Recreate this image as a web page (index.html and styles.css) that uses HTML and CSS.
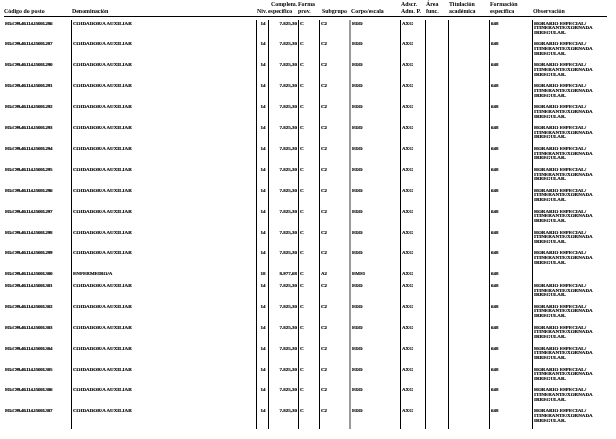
FILE: index.html
```html
<!DOCTYPE html>
<html lang="gl">
<head>
<meta charset="utf-8">
<title>Postos</title>
<link rel="stylesheet" href="styles.css">
</head>
<body>
<div class="sheet">
  <div class="row head">
    <div class="c code">Código do posto</div>
    <div class="c den">Denominación</div>
    <div class="c niv">Niv.</div>
    <div class="c comp"><span class="indent">Complem.</span><br>específico</div>
    <div class="c forma">Forma<br>prov.</div>
    <div class="c sub">Subgrupo</div>
    <div class="c corpo">Corpo/escala</div>
    <div class="c adscr">Adscr.<br>Adm. P.</div>
    <div class="c area">Área<br>func.</div>
    <div class="c tit">Titulación<br>académica</div>
    <div class="c form">Formación<br>específica</div>
    <div class="c obs">Observación</div>
  </div>
  <div class="body">
    <div class="row"><div class="c code">ED.C99.40.114.15001.286</div><div class="c den">COIDADOR/A AUXILIAR</div><div class="c niv">14</div><div class="c comp">7.825,30</div><div class="c forma">C</div><div class="c sub">C2</div><div class="c corpo">EDD</div><div class="c adscr">AXG</div><div class="c area"></div><div class="c tit"></div><div class="c form">648</div><div class="c obs">HORARIO ESPECIAL/<br>ITINERANTE/XORNADA<br>IRREGULAR.</div></div>
    <div class="row"><div class="c code">ED.C99.40.114.15001.287</div><div class="c den">COIDADOR/A AUXILIAR</div><div class="c niv">14</div><div class="c comp">7.825,30</div><div class="c forma">C</div><div class="c sub">C2</div><div class="c corpo">EDD</div><div class="c adscr">AXG</div><div class="c area"></div><div class="c tit"></div><div class="c form">648</div><div class="c obs">HORARIO ESPECIAL/<br>ITINERANTE/XORNADA<br>IRREGULAR.</div></div>
    <div class="row"><div class="c code">ED.C99.40.114.15001.290</div><div class="c den">COIDADOR/A AUXILIAR</div><div class="c niv">14</div><div class="c comp">7.825,30</div><div class="c forma">C</div><div class="c sub">C2</div><div class="c corpo">EDD</div><div class="c adscr">AXG</div><div class="c area"></div><div class="c tit"></div><div class="c form">648</div><div class="c obs">HORARIO ESPECIAL/<br>ITINERANTE/XORNADA<br>IRREGULAR.</div></div>
    <div class="row"><div class="c code">ED.C99.40.114.15001.291</div><div class="c den">COIDADOR/A AUXILIAR</div><div class="c niv">14</div><div class="c comp">7.825,30</div><div class="c forma">C</div><div class="c sub">C2</div><div class="c corpo">EDD</div><div class="c adscr">AXG</div><div class="c area"></div><div class="c tit"></div><div class="c form">648</div><div class="c obs">HORARIO ESPECIAL/<br>ITINERANTE/XORNADA<br>IRREGULAR.</div></div>
    <div class="row"><div class="c code">ED.C99.40.114.15001.292</div><div class="c den">COIDADOR/A AUXILIAR</div><div class="c niv">14</div><div class="c comp">7.825,30</div><div class="c forma">C</div><div class="c sub">C2</div><div class="c corpo">EDD</div><div class="c adscr">AXG</div><div class="c area"></div><div class="c tit"></div><div class="c form">648</div><div class="c obs">HORARIO ESPECIAL/<br>ITINERANTE/XORNADA<br>IRREGULAR.</div></div>
    <div class="row"><div class="c code">ED.C99.40.114.15001.293</div><div class="c den">COIDADOR/A AUXILIAR</div><div class="c niv">14</div><div class="c comp">7.825,30</div><div class="c forma">C</div><div class="c sub">C2</div><div class="c corpo">EDD</div><div class="c adscr">AXG</div><div class="c area"></div><div class="c tit"></div><div class="c form">648</div><div class="c obs">HORARIO ESPECIAL/<br>ITINERANTE/XORNADA<br>IRREGULAR.</div></div>
    <div class="row"><div class="c code">ED.C99.40.114.15001.294</div><div class="c den">COIDADOR/A AUXILIAR</div><div class="c niv">14</div><div class="c comp">7.825,30</div><div class="c forma">C</div><div class="c sub">C2</div><div class="c corpo">EDD</div><div class="c adscr">AXG</div><div class="c area"></div><div class="c tit"></div><div class="c form">648</div><div class="c obs">HORARIO ESPECIAL/<br>ITINERANTE/XORNADA<br>IRREGULAR.</div></div>
    <div class="row"><div class="c code">ED.C99.40.114.15001.295</div><div class="c den">COIDADOR/A AUXILIAR</div><div class="c niv">14</div><div class="c comp">7.825,30</div><div class="c forma">C</div><div class="c sub">C2</div><div class="c corpo">EDD</div><div class="c adscr">AXG</div><div class="c area"></div><div class="c tit"></div><div class="c form">648</div><div class="c obs">HORARIO ESPECIAL/<br>ITINERANTE/XORNADA<br>IRREGULAR.</div></div>
    <div class="row"><div class="c code">ED.C99.40.114.15001.296</div><div class="c den">COIDADOR/A AUXILIAR</div><div class="c niv">14</div><div class="c comp">7.825,30</div><div class="c forma">C</div><div class="c sub">C2</div><div class="c corpo">EDD</div><div class="c adscr">AXG</div><div class="c area"></div><div class="c tit"></div><div class="c form">648</div><div class="c obs">HORARIO ESPECIAL/<br>ITINERANTE/XORNADA<br>IRREGULAR.</div></div>
    <div class="row"><div class="c code">ED.C99.40.114.15001.297</div><div class="c den">COIDADOR/A AUXILIAR</div><div class="c niv">14</div><div class="c comp">7.825,30</div><div class="c forma">C</div><div class="c sub">C2</div><div class="c corpo">EDD</div><div class="c adscr">AXG</div><div class="c area"></div><div class="c tit"></div><div class="c form">648</div><div class="c obs">HORARIO ESPECIAL/<br>ITINERANTE/XORNADA<br>IRREGULAR.</div></div>
    <div class="row"><div class="c code">ED.C99.40.114.15001.298</div><div class="c den">COIDADOR/A AUXILIAR</div><div class="c niv">14</div><div class="c comp">7.825,30</div><div class="c forma">C</div><div class="c sub">C2</div><div class="c corpo">EDD</div><div class="c adscr">AXG</div><div class="c area"></div><div class="c tit"></div><div class="c form">648</div><div class="c obs">HORARIO ESPECIAL/<br>ITINERANTE/XORNADA<br>IRREGULAR.</div></div>
    <div class="row"><div class="c code">ED.C99.40.114.15001.299</div><div class="c den">COIDADOR/A AUXILIAR</div><div class="c niv">14</div><div class="c comp">7.825,30</div><div class="c forma">C</div><div class="c sub">C2</div><div class="c corpo">EDD</div><div class="c adscr">AXG</div><div class="c area"></div><div class="c tit"></div><div class="c form">648</div><div class="c obs">HORARIO ESPECIAL/<br>ITINERANTE/XORNADA<br>IRREGULAR.</div></div>
    <div class="row"><div class="c code">ED.C99.40.114.15001.300</div><div class="c den">ENFERMEIRO/A</div><div class="c niv">18</div><div class="c comp">8.977,68</div><div class="c forma">C</div><div class="c sub">A2</div><div class="c corpo">EMS1</div><div class="c adscr">AXG</div><div class="c area"></div><div class="c tit"></div><div class="c form">648</div><div class="c obs"></div></div>
    <div class="row"><div class="c code">ED.C99.40.114.15001.301</div><div class="c den">COIDADOR/A AUXILIAR</div><div class="c niv">14</div><div class="c comp">7.825,30</div><div class="c forma">C</div><div class="c sub">C2</div><div class="c corpo">EDD</div><div class="c adscr">AXG</div><div class="c area"></div><div class="c tit"></div><div class="c form">648</div><div class="c obs">HORARIO ESPECIAL/<br>ITINERANTE/XORNADA<br>IRREGULAR.</div></div>
    <div class="row"><div class="c code">ED.C99.40.114.15001.302</div><div class="c den">COIDADOR/A AUXILIAR</div><div class="c niv">14</div><div class="c comp">7.825,30</div><div class="c forma">C</div><div class="c sub">C2</div><div class="c corpo">EDD</div><div class="c adscr">AXG</div><div class="c area"></div><div class="c tit"></div><div class="c form">648</div><div class="c obs">HORARIO ESPECIAL/<br>ITINERANTE/XORNADA<br>IRREGULAR.</div></div>
    <div class="row"><div class="c code">ED.C99.40.114.15001.303</div><div class="c den">COIDADOR/A AUXILIAR</div><div class="c niv">14</div><div class="c comp">7.825,30</div><div class="c forma">C</div><div class="c sub">C2</div><div class="c corpo">EDD</div><div class="c adscr">AXG</div><div class="c area"></div><div class="c tit"></div><div class="c form">648</div><div class="c obs">HORARIO ESPECIAL/<br>ITINERANTE/XORNADA<br>IRREGULAR.</div></div>
    <div class="row"><div class="c code">ED.C99.40.114.15001.304</div><div class="c den">COIDADOR/A AUXILIAR</div><div class="c niv">14</div><div class="c comp">7.825,30</div><div class="c forma">C</div><div class="c sub">C2</div><div class="c corpo">EDD</div><div class="c adscr">AXG</div><div class="c area"></div><div class="c tit"></div><div class="c form">648</div><div class="c obs">HORARIO ESPECIAL/<br>ITINERANTE/XORNADA<br>IRREGULAR.</div></div>
    <div class="row"><div class="c code">ED.C99.40.114.15001.305</div><div class="c den">COIDADOR/A AUXILIAR</div><div class="c niv">14</div><div class="c comp">7.825,30</div><div class="c forma">C</div><div class="c sub">C2</div><div class="c corpo">EDD</div><div class="c adscr">AXG</div><div class="c area"></div><div class="c tit"></div><div class="c form">648</div><div class="c obs">HORARIO ESPECIAL/<br>ITINERANTE/XORNADA<br>IRREGULAR.</div></div>
    <div class="row"><div class="c code">ED.C99.40.114.15001.306</div><div class="c den">COIDADOR/A AUXILIAR</div><div class="c niv">14</div><div class="c comp">7.825,30</div><div class="c forma">C</div><div class="c sub">C2</div><div class="c corpo">EDD</div><div class="c adscr">AXG</div><div class="c area"></div><div class="c tit"></div><div class="c form">648</div><div class="c obs">HORARIO ESPECIAL/<br>ITINERANTE/XORNADA<br>IRREGULAR.</div></div>
    <div class="row"><div class="c code">ED.C99.40.114.15001.307</div><div class="c den">COIDADOR/A AUXILIAR</div><div class="c niv">14</div><div class="c comp">7.825,30</div><div class="c forma">C</div><div class="c sub">C2</div><div class="c corpo">EDD</div><div class="c adscr">AXG</div><div class="c area"></div><div class="c tit"></div><div class="c form">648</div><div class="c obs">HORARIO ESPECIAL/<br>ITINERANTE/XORNADA<br>IRREGULAR.</div></div>
  </div>
</div>
</body>
</html>
```

FILE: styles.css
```css
html, body {
  margin: 0;
  padding: 0;
  background: #ffffff;
}

.sheet {
  padding: 1px 9px 0 4px;
  font-family: "Liberation Serif", "Times New Roman", serif;
  font-weight: bold;
  color: #000;
  will-change: transform;
  background: #ffffff;
}

.row {
  display: grid;
  grid-template-columns: 67px 185px 12px 30px 21px 30px 51px 25px 23px 41px 43px 1fr;
}

.c {
  white-space: nowrap;
  overflow: visible;
}

/* header */
.head {
  align-items: end;
  font-size: 5.9px;
  line-height: 7px;
  padding-bottom: 1px;
  border-bottom: 1px solid #000;
}

.head .c { padding-left: 1px; }
.head .code { padding-left: 0; }
.head .comp { padding-left: 0; }
.head .comp .indent { margin-left: 3px; }
.head .forma { padding-left: 0; }
.head .sub { padding-left: 3px; }
.head .corpo { padding-left: 2px; }

/* body rows */
.body {
  margin-top: 3px;
  font-size: 5px;
  line-height: 4.7px;
  -webkit-text-stroke: 0.15px #000;
}

.body .row .c {
  padding-top: 1.5px;
  padding-bottom: 5.3px;
  border-left: 1px solid #000;
  padding-left: 1px;
}

.body .row .code {
  border-left: none;
  padding-left: 1px;
  letter-spacing: -0.3px;
}

.body .row .niv { text-align: center; }
.body .row .comp { text-align: right; padding-right: 1px; }
.body .row .corpo { border-left: 2px solid #9a9a9a; }
```
